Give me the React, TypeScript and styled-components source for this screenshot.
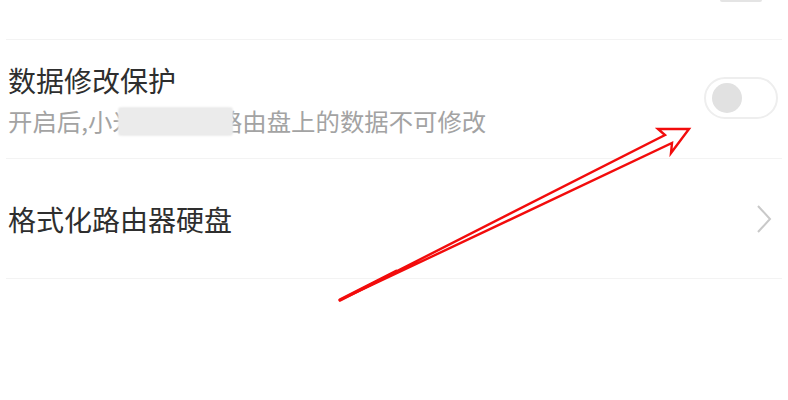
import React from 'react';
import styled, { createGlobalStyle } from 'styled-components';

const GlobalStyle = createGlobalStyle`
  html, body {
    margin: 0;
    padding: 0;
    background: #fff;
  }
  body {
    font-family: "Noto Sans CJK SC", "Noto Sans", sans-serif;
  }
`;

const Page = styled.div`
  position: relative;
  width: 788px;
  height: 400px;
  overflow: hidden;
  background: #fff;
`;

const TopStrip = styled.div`
  height: 39px;
  display: flex;
  justify-content: flex-end;
  padding-right: 26px;
`;

const TopNub = styled.div`
  width: 42px;
  height: 2px;
  background: #e4e4e4;
  border-radius: 0 0 2px 2px;
`;

const Divider = styled.div`
  height: 1px;
  margin: 0 6px;
  background: #f3f3f3;
`;

const Row = styled.div<{ $height: number }>`
  height: ${(p) => p.$height}px;
  box-sizing: border-box;
  display: flex;
  align-items: center;
  justify-content: space-between;
  padding: 0 10px 0 8px;
`;

const TextBlock = styled.div`
  display: flex;
  flex-direction: column;
  gap: 9px;
`;

const Title = styled.div`
  font-size: 28px;
  line-height: 34px;
  color: #2e2e2e;
  white-space: nowrap;
`;

const Subtitle = styled.div`
  position: relative;
  font-size: 24.4px;
  line-height: 30px;
  color: #a3a3a3;
  white-space: nowrap;
`;

const Masked = styled.span`
  letter-spacing: 2px;
`;

// soft grey patch covering part of the description
const Smudge = styled.span`
  position: absolute;
  left: 111px;
  top: 2px;
  width: 113px;
  height: 27px;
  border-radius: 2px;
  background: #ebebeb;
  box-shadow: 0 0 2px 1px #ededed;
`;

const Toggle = styled.div`
  width: 74px;
  height: 42px;
  box-sizing: border-box;
  border: 2px solid #eeeeee;
  border-radius: 21px;
  display: flex;
  align-items: center;
  padding-left: 6px;
  margin-top: -3px;
`;

const Knob = styled.div`
  width: 30px;
  height: 30px;
  border-radius: 50%;
  background: #e1e1e1;
`;

const Chevron = styled.svg`
  width: 16px;
  height: 30px;
  margin-right: 6px;
`;

const Overlay = styled.svg`
  position: absolute;
  left: 0;
  top: 0;
  pointer-events: none;
`;

export default function App() {
  return (
    <>
      <GlobalStyle />
      <Page>
        <TopStrip>
          <TopNub />
        </TopStrip>
        <Divider />
        <Row $height={118}>
          <TextBlock>
            <Title>数据修改保护</Title>
            <Subtitle>
              开启后,小<Masked>米路由器</Masked>路由盘上的数据不可修改
              <Smudge />
            </Subtitle>
          </TextBlock>
          <Toggle>
            <Knob />
          </Toggle>
        </Row>
        <Divider />
        <Row $height={119}>
          <Title>格式化路由器硬盘</Title>
          <Chevron viewBox="0 0 16 30">
            <polyline points="2,2 14,15 2,28" fill="none" stroke="#c9c9c9" strokeWidth="2" />
          </Chevron>
        </Row>
        <Divider />
        <Overlay width="788" height="400" viewBox="0 0 788 400">
          <path
            d="M340 300 L665 135 L658 129 L689 129 L671 153 L672 143 Z"
            fill="none"
            stroke="#f20c0c"
            strokeWidth="2.4"
            strokeLinejoin="miter"
          />
          <line x1="340" y1="300" x2="396" y2="271.5" stroke="#f20c0c" strokeWidth="3.6" strokeLinecap="round" />
        </Overlay>
      </Page>
    </>
  );
}
